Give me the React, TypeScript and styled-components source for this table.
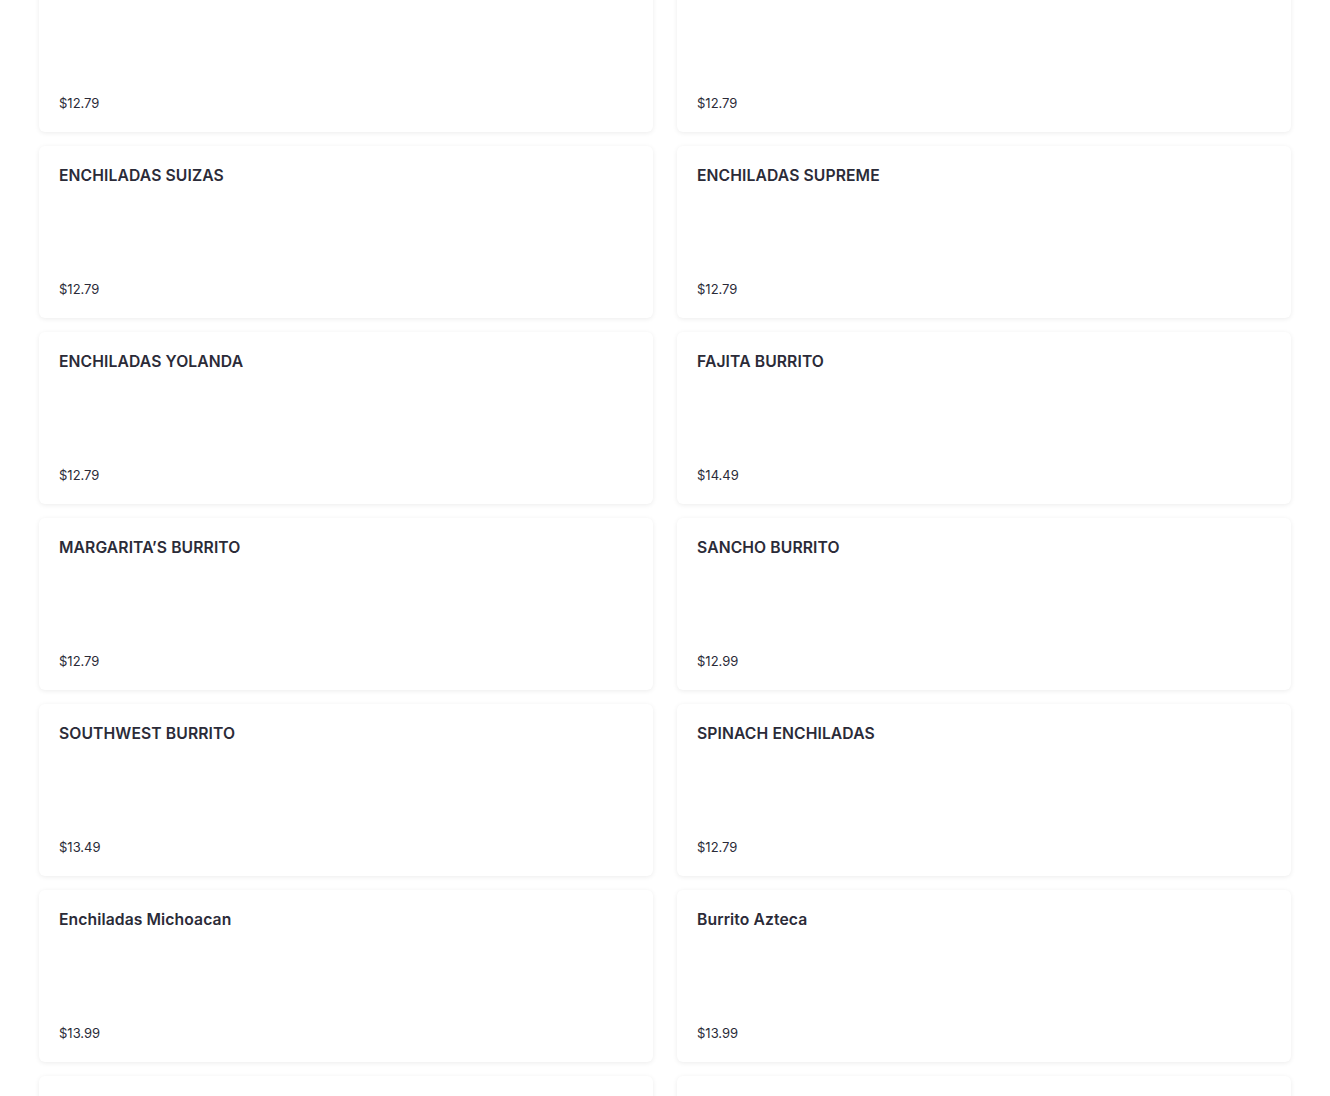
import React from 'react';
import styled, { createGlobalStyle } from 'styled-components';

const GlobalStyle = createGlobalStyle`
  body {
    margin: 0;
    background: #ffffff;
    font-family: Inter, 'Noto Sans', Arial, sans-serif;
    overflow: hidden;
  }
`;

type Item = { name: string; price: string };

const items: Item[] = [
  { name: '', price: '$12.79' },
  { name: '', price: '$12.79' },
  { name: 'ENCHILADAS SUIZAS', price: '$12.79' },
  { name: 'ENCHILADAS SUPREME', price: '$12.79' },
  { name: 'ENCHILADAS YOLANDA', price: '$12.79' },
  { name: 'FAJITA BURRITO', price: '$14.49' },
  { name: 'MARGARITA’S BURRITO', price: '$12.79' },
  { name: 'SANCHO BURRITO', price: '$12.99' },
  { name: 'SOUTHWEST BURRITO', price: '$13.49' },
  { name: 'SPINACH ENCHILADAS', price: '$12.79' },
  { name: 'Enchiladas Michoacan', price: '$13.99' },
  { name: 'Burrito Azteca', price: '$13.99' },
  { name: '', price: '' },
  { name: '', price: '' },
];

export default function App() {
  return (
    <>
      <GlobalStyle />
      <MenuGrid>
        {items.map((item, i) => (
          <Card key={i}>
            <ItemName>{item.name}</ItemName>
            <Price>{item.price}</Price>
          </Card>
        ))}
      </MenuGrid>
    </>
  );
}

const MenuGrid = styled.main`
  display: grid;
  grid-template-columns: 1fr 1fr;
  column-gap: 24px;
  row-gap: 14px;
  padding: 0 39px;
  margin-top: -40px;
`;

const Card = styled.article`
  height: 172px;
  box-sizing: border-box;
  padding: 23px 20px 22px;
  display: flex;
  flex-direction: column;
  justify-content: space-between;
  background: #fff;
  border-radius: 6px;
  box-shadow: 0 1px 5px rgba(0, 0, 0, 0.08);
`;

const ItemName = styled.h3`
  margin: 0;
  font-size: 15.7px;
  line-height: 14px;
  font-weight: 600;
  color: #2b2b38;
  letter-spacing: 0.1px;
`;

const Price = styled.span`
  font-size: 13px;
  line-height: 14px;
  color: #2b2b38;
`;
